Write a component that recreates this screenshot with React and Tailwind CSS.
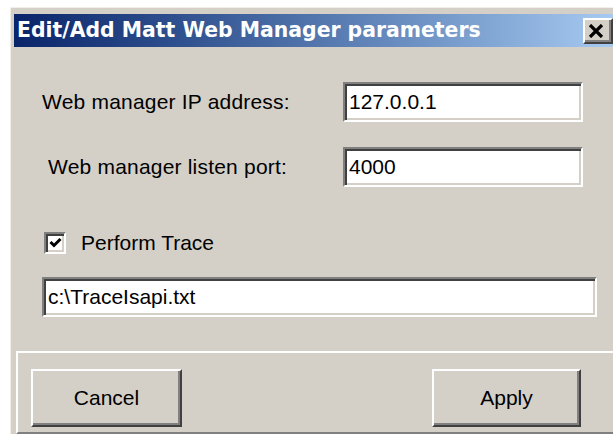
import { useState } from "react";

// classic win32 bevels
const sunken =
  "border-2 border-t-[#808080] border-l-[#808080] border-b-white border-r-white shadow-[inset_2px_2px_0_#404040,inset_-2px_-2px_0_#d4d0c8]";
const raised =
  "border-2 border-t-white border-l-white border-b-[#404040] border-r-[#404040] shadow-[inset_-2px_-2px_0_#808080]";

function TextBox({ value, onChange, className }) {
  return (
    <div className={`${sunken} bg-white flex items-center ${className}`}>
      <input
        value={value}
        onChange={(e) => onChange(e.target.value)}
        className="w-full bg-transparent outline-none pl-[4px] text-[21px] text-black font-['Liberation_Sans',Arial,sans-serif]"
      />
    </div>
  );
}

function Button({ children, className }) {
  return (
    <button
      className={`${raised} bg-[#d4d0c8] flex items-center justify-center text-[21px] text-black font-['Liberation_Sans',Arial,sans-serif] ${className}`}
    >
      {children}
    </button>
  );
}

export default function App() {
  const [ip, setIp] = useState("127.0.0.1");
  const [port, setPort] = useState("4000");
  const [trace, setTrace] = useState(true);
  const [traceFile, setTraceFile] = useState("c:\\TraceIsapi.txt");

  return (
    <div className="w-[613px] h-[434px] bg-white overflow-hidden pl-[10px] pt-[7px] font-['Liberation_Sans',Arial,sans-serif]">
      <div className="h-full flex flex-col bg-[#d4d0c8] border-l border-t border-[#f1efe8] pl-[3px] pt-[6px]">
        {/* Title bar */}
        <div className="h-[33px] shrink-0 flex items-center justify-between pl-[3px] bg-linear-to-r from-[#0a246a] to-[#a6caf0]">
          <span className="text-white font-bold text-[20.4px] leading-none font-['DejaVu_Sans',Verdana,sans-serif] whitespace-nowrap">
            Edit/Add Matt Web Manager parameters
          </span>
          <button className={`${raised} w-[30px] h-[26px] bg-[#d4d0c8] flex items-center justify-start pl-[3px]`}>
            <svg width="16" height="14" viewBox="0 0 16 14">
              <path d="M2 1 L14 13 M14 1 L2 13" stroke="#000" strokeWidth="3.2" />
            </svg>
          </button>
        </div>

        {/* Form */}
        <div className="flex-1 flex flex-col pt-[35px]">
          <div className="flex items-center h-[40px]">
            <span className="w-[329px] pl-[28px] text-[21px] tracking-[0.2px] text-black">Web manager IP address:</span>
            <TextBox value={ip} onChange={setIp} className="w-[240px] h-[40px]" />
          </div>

          <div className="flex items-center h-[40px] mt-[25px]">
            <span className="w-[329px] pl-[34px] text-[21px] tracking-[0.2px] text-black">Web manager listen port:</span>
            <TextBox value={port} onChange={setPort} className="w-[240px] h-[40px]" />
          </div>

          <label className="flex items-center h-[23px] mt-[44px] pl-[30px] gap-[15px]">
            <span
              onClick={() => setTrace(!trace)}
              className={`${sunken} w-[22px] h-[22px] bg-white flex items-center justify-center`}
            >
              {trace && (
                <svg width="13" height="11" viewBox="0 0 13 11">
                  <path d="M1.5 5 L5 8.5 L11.5 2" fill="none" stroke="#000" strokeWidth="3" />
                </svg>
              )}
            </span>
            <span className="text-[21px] text-black">Perform Trace</span>
          </label>

          <div className="mt-[23px] pl-[28px]">
            <TextBox value={traceFile} onChange={setTraceFile} className="w-[555px] h-[40px]" />
          </div>

          {/* Button panel */}
          <div className="mt-auto ml-[2px] h-[83px] flex items-start justify-between border-t-2 border-l-2 border-t-white border-l-white border-b-2 border-b-[#808080] pl-[13px] pr-[32px] pt-[16px]">
            <Button className="w-[151px] h-[58px]">Cancel</Button>
            <Button className="w-[149px] h-[58px]">Apply</Button>
          </div>
        </div>
      </div>
    </div>
  );
}
